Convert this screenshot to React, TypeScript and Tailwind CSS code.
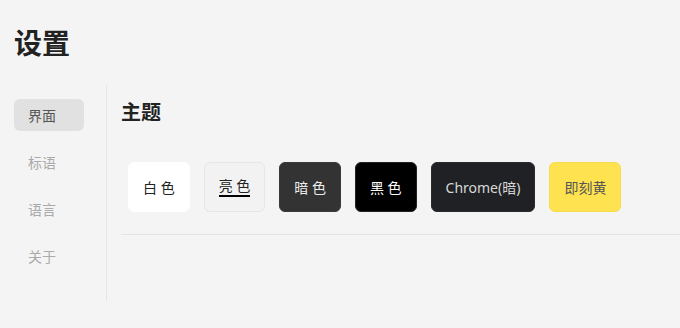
import React from "react";

const themes = [
  { label: "白 色", cls: "bg-white border-white text-[#222]" },
  { label: "亮 色", cls: "bg-[#f2f2f2] border-[#e6e6e6] text-[#222]", active: true },
  { label: "暗 色", cls: "bg-[#333333] border-[#3a3a3a] text-[#eee]" },
  { label: "黑 色", cls: "bg-black border-[#222] text-white" },
  { label: "Chrome(暗)", cls: "bg-[#202124] border-[#2a2b2e] text-[#d8d8d8]" },
  { label: "即刻黄", cls: "bg-[#fee24f] border-[#f8dc4c] text-[#555]" },
];

const navItems = ["界面", "标语", "语言", "关于"];

export default function App() {
  return (
    <div
      className="w-[680px] h-[328px] bg-[#f4f4f4] overflow-hidden text-[#222]"
      style={{ fontFamily: '"Noto Sans", "Noto Sans CJK SC", sans-serif' }}
    >
      <h1 className="pl-[14px] pt-[25px] text-[28px] font-bold leading-[36px]">设置</h1>

      <div className="flex mt-[24px]">
        {/* Sidebar */}
        <nav className="w-[107px] h-[216px] border-r border-[#e6e6e6] pl-[14px] pt-[14px] flex flex-col gap-[15px]">
          {navItems.map((item, i) => (
            <div
              key={item}
              className={
                "w-[70px] h-[32px] rounded-[6px] pl-[14px] flex items-center text-[14px] " +
                (i === 0 ? "bg-[#e1e1e1] text-[#555]" : "text-[#aaa]")
              }
            >
              {item}
            </div>
          ))}
        </nav>

        {/* Content */}
        <main className="flex-1 pl-[14px] pt-[14px]">
          <h2 className="text-[20px] font-bold leading-[28px]">主题</h2>

          <div className="flex gap-[14px] pl-[7px] mt-[35px]">
            {themes.map((t) => (
              <button
                key={t.label}
                className={
                  "h-[50px] px-[14px] border rounded-[6px] flex items-center justify-center text-[14px] whitespace-pre " +
                  t.cls
                }
              >
                {t.active ? (
                  <span className="border-b-2 border-black leading-[18px]">{t.label}</span>
                ) : (
                  t.label
                )}
              </button>
            ))}
          </div>

          <div className="mt-[22px] border-t border-[#e4e4e4]" />
        </main>
      </div>
    </div>
  );
}
